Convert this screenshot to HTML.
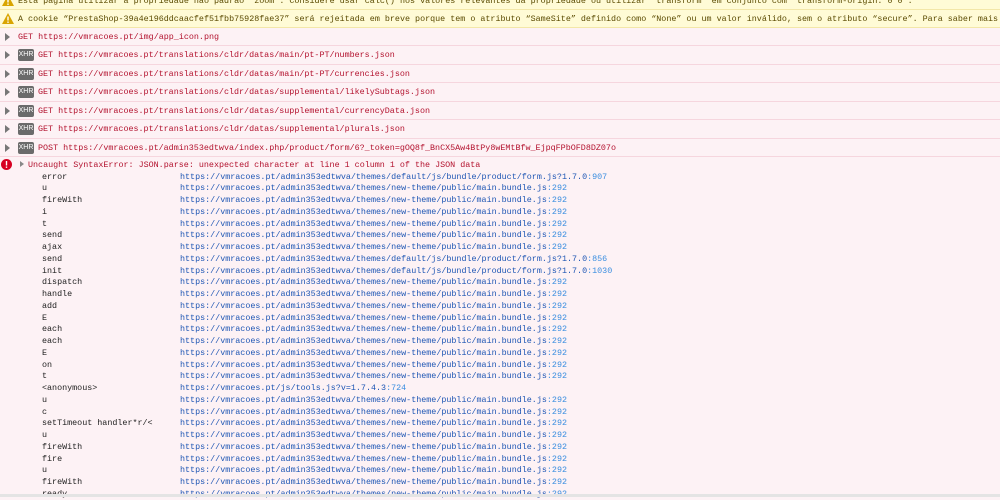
<!DOCTYPE html>
<html><head><meta charset="utf-8"><style>
body{margin:0;width:1000px;height:497px;overflow:hidden;background:#fdf2f5;font-family:"Liberation Mono",monospace;font-size:8.4px;position:relative}
.r{position:absolute;left:0;width:1000px;height:18px;box-sizing:border-box;border-bottom:1px solid #f6d6de;white-space:nowrap;overflow:hidden}
.w{background:#fffbd6;border-bottom:1px solid #f3e7a8;color:#5a4a00}
.t{position:absolute;top:4px;line-height:10px}
.e{color:#b3122e}
.tri{position:absolute;left:5px;top:5px;width:0;height:0;border-left:5px solid #777;border-top:4px solid transparent;border-bottom:4px solid transparent}
.xhr{position:absolute;left:18px;top:3px;width:16px;height:12px;background:#6b6b6b;color:#fff;font-family:"Liberation Sans",sans-serif;font-size:7px;line-height:12px;text-align:center;border-radius:2px}
.warn{position:absolute;left:2px;top:3px}
.s{position:absolute;left:0;height:12px;line-height:12px;white-space:nowrap;color:#222}
.s .f{position:absolute;left:42px}
.s .u{position:absolute;left:180px;color:#1e56b4}
.s .u b{font-weight:normal;color:#3a8ee0}
</style></head><body>
<div class="r w" style="top:-8px"><svg class="warn" width="12" height="11" viewBox="0 0 12 11"><path d="M6 0L12 11H0Z" fill="#d9a500"/><rect x="5.3" y="3.5" width="1.4" height="4" fill="#fff"/><rect x="5.3" y="8.5" width="1.4" height="1.4" fill="#fff"/></svg><span class="t" style="left:18px">Esta página utilizar a propriedade não padrão “zoom”. Considere usar calc() nos valores relevantes da propriedade ou utilizar “transform” em conjunto com “transform-origin: 0 0”.</span></div>
<div class="r w" style="top:10px"><svg class="warn" width="12" height="11" viewBox="0 0 12 11"><path d="M6 0L12 11H0Z" fill="#d9a500"/><rect x="5.3" y="3.5" width="1.4" height="4" fill="#fff"/><rect x="5.3" y="8.5" width="1.4" height="1.4" fill="#fff"/></svg><span class="t" style="left:18px">A cookie “PrestaShop-39a4e196ddcaacfef51fbb75928fae37” será rejeitada em breve porque tem o atributo “SameSite” definido como “None” ou um valor inválido, sem o atributo “secure”. Para saber mais</span></div>
<div class="r" style="top:28px"><div class="tri"></div><span class="t e" style="left:18px">GET https://vmracoes.pt/img/app_icon.png</span></div>
<div class="r" style="top:46px;height:18.5px"><div class="tri"></div><div class="xhr">XHR</div><span class="t e" style="left:38px">GET https://vmracoes.pt/translations/cldr/datas/main/pt-PT/numbers.json</span></div>
<div class="r" style="top:64.5px;height:18.5px"><div class="tri"></div><div class="xhr">XHR</div><span class="t e" style="left:38px">GET https://vmracoes.pt/translations/cldr/datas/main/pt-PT/currencies.json</span></div>
<div class="r" style="top:83px;height:18.5px"><div class="tri"></div><div class="xhr">XHR</div><span class="t e" style="left:38px">GET https://vmracoes.pt/translations/cldr/datas/supplemental/likelySubtags.json</span></div>
<div class="r" style="top:101.5px;height:18.5px"><div class="tri"></div><div class="xhr">XHR</div><span class="t e" style="left:38px">GET https://vmracoes.pt/translations/cldr/datas/supplemental/currencyData.json</span></div>
<div class="r" style="top:120px;height:18.5px"><div class="tri"></div><div class="xhr">XHR</div><span class="t e" style="left:38px">GET https://vmracoes.pt/translations/cldr/datas/supplemental/plurals.json</span></div>
<div class="r" style="top:138.5px;height:18px"><div class="tri"></div><div class="xhr">XHR</div><span class="t e" style="left:38px">POST https://vmracoes.pt/admin353edtwva/index.php/product/form/6?_token=gOQ8f_BnCX5Aw4BtPy8wEMtBfw_EjpqFPbOFD8DZ07o</span></div>
<div style="position:absolute;left:0;top:157px;width:1000px">
<svg style="position:absolute;left:1px;top:2px" width="11" height="11" viewBox="0 0 11 11"><circle cx="5.5" cy="5.5" r="5.5" fill="#d70022"/><rect x="4.8" y="2" width="1.4" height="4.5" fill="#fff"/><rect x="4.8" y="7.5" width="1.4" height="1.4" fill="#fff"/></svg>
<div style="position:absolute;left:20px;top:4px;border-left:4px solid #888;border-top:3.5px solid transparent;border-bottom:3.5px solid transparent"></div>
<span class="e" style="position:absolute;left:28px;top:2px;line-height:12px;white-space:nowrap">Uncaught SyntaxError: JSON.parse: unexpected character at line 1 column 1 of the JSON data</span>
</div>
<div id="st"></div>
<div style="position:absolute;left:0;top:494px;width:1000px;height:3px;background:#e4e4e4"></div>
<script>
var M="https://vmracoes.pt/admin353edtwva/themes/new-theme/public/main.bundle.js",F="https://vmracoes.pt/admin353edtwva/themes/default/js/bundle/product/form.js?1.7.0";
var d=[["error",F,"907"],["u",M,"292"],["fireWith",M,"292"],["i",M,"292"],["t",M,"292"],["send",M,"292"],["ajax",M,"292"],["send",F,"856"],["init",F,"1030"],["dispatch",M,"292"],["handle",M,"292"],["add",M,"292"],["E",M,"292"],["each",M,"292"],["each",M,"292"],["E",M,"292"],["on",M,"292"],["t",M,"292"],["<anonymous>","https://vmracoes.pt/js/tools.js?v=1.7.4.3","724"],["u",M,"292"],["c",M,"292"],["setTimeout handler*r/<",M,"292"],["u",M,"292"],["fireWith",M,"292"],["fire",M,"292"],["u",M,"292"],["fireWith",M,"292"],["ready",M,"292"]];
var h="";d.forEach(function(r,i){var y=170.5+i*11.75;h+='<div class="s" style="top:'+y+'px"><span class="f"></span><span class="u"></span></div>';});
var st=document.getElementById("st");st.innerHTML=h;var rows=st.children;
d.forEach(function(r,i){rows[i].children[0].textContent=r[0];rows[i].children[1].innerHTML=r[1]+'<b>:'+r[2]+'</b>';});
</script>
</body></html>
